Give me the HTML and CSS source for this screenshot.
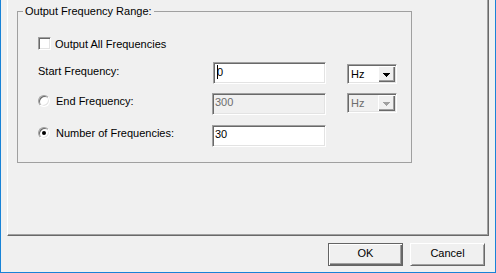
FILE: index.html
```html
<!DOCTYPE html>
<html>
<head>
<meta charset="utf-8">
<link rel="stylesheet" href="styles.css">
</head>
<body>
<div class="window">
  <div class="panel">
    <fieldset class="group">
      <legend>Output Frequency Range:</legend>
      <div class="group-body">
        <div class="row row-check">
          <span class="checkbox"></span>
          <span class="check-label">Output All Frequencies</span>
        </div>
        <div class="row row-start">
          <div class="label-cell"><span class="label label-plain">Start Frequency:</span></div>
          <div class="textbox textbox-start"><span class="caret"></span>0</div>
          <div class="combo combo-start">
            <span class="combo-text">Hz</span>
            <span class="drop"><svg width="7" height="4" viewBox="0 0 7 4" shape-rendering="crispEdges"><path d="M0 0h7v1h-1v1h-1v1h-1v1h-1v-1h-1v-1h-1v-1h-1z" fill="#000"/></svg></span>
          </div>
        </div>
        <div class="row row-end">
          <div class="label-cell"><span class="radio"></span><span class="label">End Frequency:</span></div>
          <div class="textbox disabled">300</div>
          <div class="combo combo-end disabled">
            <span class="combo-text">Hz</span>
            <span class="drop"><svg width="7" height="4" viewBox="0 0 7 4" shape-rendering="crispEdges"><path d="M0 0h7v1h-1v1h-1v1h-1v1h-1v-1h-1v-1h-1v-1h-1z" fill="#a0a0a0"/></svg></span>
          </div>
        </div>
        <div class="row row-num">
          <div class="label-cell"><span class="radio checked"></span><span class="label">Number of Frequencies:</span></div>
          <div class="textbox">30</div>
        </div>
      </div>
    </fieldset>
  </div>
  <div class="actions">
    <button class="btn btn-default">OK</button>
    <button class="btn">Cancel</button>
  </div>
</div>
</body>
</html>
```

FILE: styles.css
```css
html, body {
  margin: 0;
  padding: 0;
}
body {
  width: 496px;
  height: 273px;
  overflow: hidden;
  background: #f0f0f0;
  font-family: "Liberation Sans", Arial, sans-serif;
  font-size: 11px;
  color: #000;
}
.window {
  box-sizing: border-box;
  height: 273px;
  border-left: 1px solid #1883d7;
  border-right: 1px solid #1883d7;
  border-bottom: 1px solid #1883d7;
  padding: 0 6px;
  display: flex;
  flex-direction: column;
}
.panel {
  box-sizing: border-box;
  height: 236px;
  border-left: 1px solid #fff;
  border-right: 1px solid #696969;
  border-bottom: 1px solid #696969;
  box-shadow: inset -1px -1px #a0a0a0;
  padding: 5px 0 0 9px;
}
.group {
  box-sizing: border-box;
  width: 395px;
  margin: 0;
  padding: 0;
  border: 1px solid #a0a0a0;
  min-width: 0;
}
.group legend {
  margin-left: 5px;
  padding: 0 2px;
  line-height: 13px;
  font-size: 11px;
}
.group-body {
  padding: 19px 0 15px 20px;
}
.row {
  display: flex;
  align-items: flex-start;
}
.row-check {
  height: 13px;
}
.row-start {
  margin-top: 12px;
}
.row-end {
  margin-top: 9px;
}
.row-num {
  margin-top: 10px;
}
.checkbox {
  box-sizing: border-box;
  width: 13px;
  height: 13px;
  background: #fff;
  border: 1px solid;
  border-color: #a0a0a0 #fff #fff #a0a0a0;
  box-shadow: inset 1px 1px #696969, inset -1px -1px #e3e3e3;
}
.check-label {
  margin-left: 4px;
  line-height: 13px;
  padding-top: 1px;
  white-space: nowrap;
}
.label-cell {
  width: 174px;
  display: flex;
  align-items: flex-start;
}
.label {
  line-height: 13px;
  padding-top: 2px;
  margin-left: 6px;
  white-space: nowrap;
}
.label-plain {
  margin-left: 0;
  padding-top: 3px;
}
.radio {
  box-sizing: border-box;
  width: 12px;
  height: 12px;
  margin-top: 2px;
  border-radius: 50%;
  background: #fff;
  border: 1px solid;
  border-color: #a0a0a0 #fff #fff #a0a0a0;
  box-shadow: inset 1px 1px #696969, inset -1px -1px #e3e3e3;
  display: flex;
  align-items: center;
  justify-content: center;
}
.radio.checked::after {
  content: "";
  width: 4px;
  height: 4px;
  border-radius: 50%;
  background: #000;
}
.textbox {
  box-sizing: border-box;
  width: 114px;
  height: 22px;
  padding: 2px 2px 3px;
  line-height: 13px;
  background: #fff;
  border: 1px solid;
  border-color: #a0a0a0 #fff #fff #a0a0a0;
  box-shadow: inset 1px 1px #696969, inset -1px -1px #e3e3e3;
  white-space: nowrap;
}
.textbox-start {
  width: 113px;
  margin-left: 1px;
}
.textbox.disabled {
  background: #f0f0f0;
  color: #6d6d6d;
}
.caret {
  display: inline-block;
  width: 1px;
  height: 14px;
  background: #000;
  vertical-align: -3px;
  margin-left: 1px;
  margin-right: -1px;
}
.combo {
  box-sizing: border-box;
  width: 50px;
  height: 20px;
  margin-left: 21px;
  padding: 1px;
  background: #fff;
  border: 1px solid;
  border-color: #a0a0a0 #fff #fff #a0a0a0;
  box-shadow: inset 1px 1px #696969, inset -1px -1px #e3e3e3;
  display: flex;
}
.combo-start {
  margin-top: 2px;
}
.combo.disabled {
  background: #f0f0f0;
  color: #6d6d6d;
}
.combo-text {
  flex: 1;
  padding: 2px 0 0 2px;
  line-height: 13px;
}
.drop {
  box-sizing: border-box;
  width: 17px;
  height: 16px;
  padding-top: 1px;
  background: #f0f0f0;
  box-shadow: inset 1px 1px #fff, inset -1px -1px #696969, inset -2px -2px #a0a0a0;
  display: flex;
  align-items: center;
  justify-content: center;
}
.drop svg {
  display: block;
}
.actions {
  display: flex;
  justify-content: flex-end;
  gap: 7px;
  padding: 7px 4px 0 0;
}
.btn {
  box-sizing: border-box;
  width: 75px;
  height: 23px;
  margin: 0;
  padding: 0 0 3px;
  line-height: 18px;
  font-family: "Liberation Sans", Arial, sans-serif;
  font-size: 11px;
  color: #000;
  background: #f0f0f0;
  border: 1px solid;
  border-color: #fff #696969 #696969 #fff;
  box-shadow: inset 1px 1px #f0f0f0, inset -1px -1px #a0a0a0;
}
.btn-default {
  border-color: #646464;
  box-shadow: inset 1px 1px #fff, inset -1px -1px #696969, inset -2px -2px #a0a0a0;
}
```
